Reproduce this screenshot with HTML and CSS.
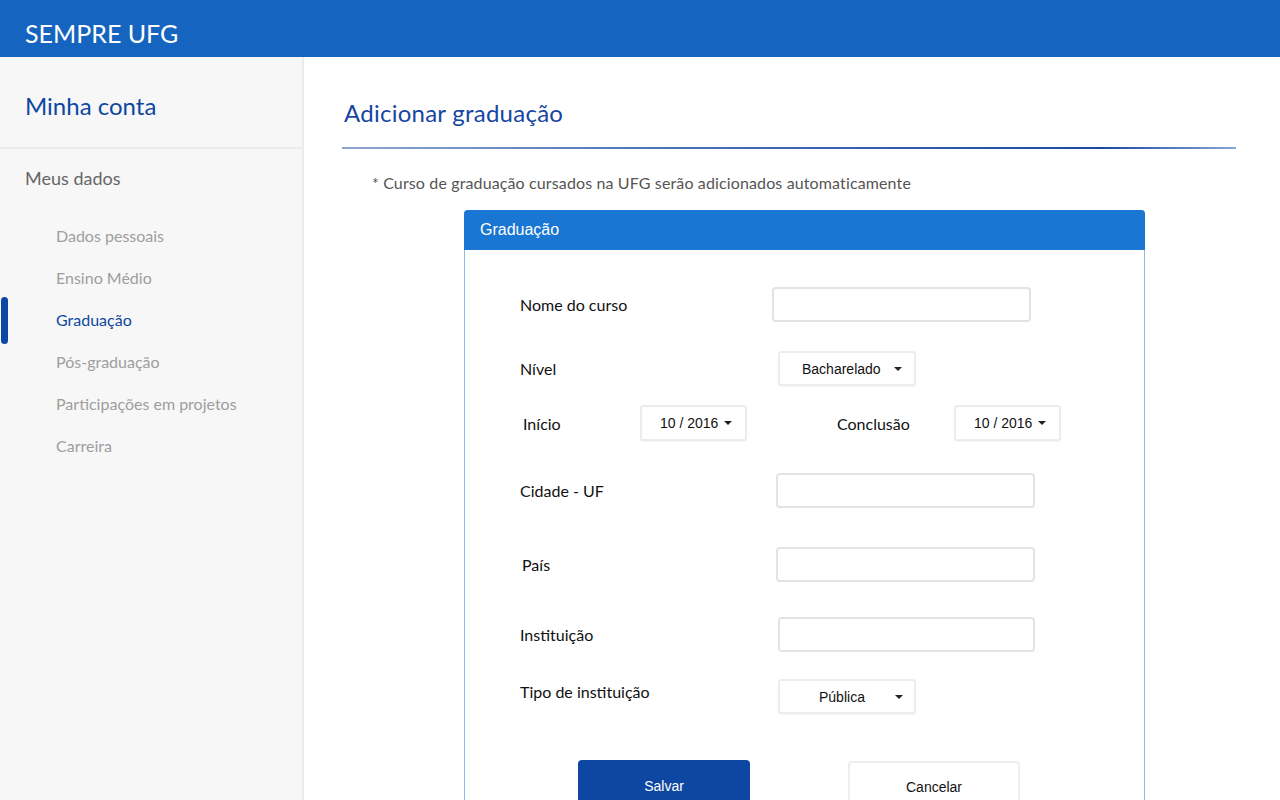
FILE: index.html
```html
<!DOCTYPE html>
<html lang="pt-BR">
<head>
<meta charset="utf-8">
<title>SEMPRE UFG - Adicionar graduação</title>
<link rel="stylesheet" href="styles.css">
</head>
<body>
<header class="topbar"><span class="brand">SEMPRE UFG</span></header>
<div class="layout">
  <aside class="sidebar">
    <div class="sidebar-head"><h2 class="account-title">Minha conta</h2></div>
    <nav class="sidebar-nav">
      <div class="section-title">Meus dados</div>
      <ul class="nav-list">
        <li class="nav-item">Dados pessoais</li>
        <li class="nav-item">Ensino Médio</li>
        <li class="nav-item active">Graduação</li>
        <li class="nav-item">Pós-graduação</li>
        <li class="nav-item">Participações em projetos</li>
        <li class="nav-item">Carreira</li>
      </ul>
    </nav>
  </aside>
  <main class="content">
    <h1 class="page-title">Adicionar graduação</h1>
    <div class="title-rule"></div>
    <p class="note">* Curso de graduação cursados na UFG serão adicionados automaticamente</p>
    <section class="card">
      <div class="card-header">Graduação</div>
      <form class="card-body">
        <div class="row row-nome">
          <label class="label">Nome do curso</label>
          <input class="text-input input-nome" type="text">
        </div>
        <div class="row row-nivel">
          <label class="label">Nível</label>
          <div class="select select-wide select-nivel"><span>Bacharelado</span><span class="caret"></span></div>
        </div>
        <div class="row row-datas">
          <label class="label label-inicio">Início</label>
          <div class="select select-date"><span>10 / 2016</span><span class="caret"></span></div>
          <label class="label label-conclusao">Conclusão</label>
          <div class="select select-date"><span>10 / 2016</span><span class="caret"></span></div>
        </div>
        <div class="row row-cidade">
          <label class="label">Cidade - UF</label>
          <input class="text-input" type="text">
        </div>
        <div class="row row-pais">
          <label class="label label-pais">País</label>
          <input class="text-input" type="text">
        </div>
        <div class="row row-inst">
          <label class="label">Instituição</label>
          <input class="text-input input-inst" type="text">
        </div>
        <div class="row row-tipo">
          <label class="label label-tipo">Tipo de instituição</label>
          <div class="select select-wide select-tipo"><span>Pública</span><span class="caret"></span></div>
        </div>
        <div class="actions">
          <button type="button" class="btn btn-primary">Salvar</button>
          <button type="button" class="btn btn-default">Cancelar</button>
        </div>
      </form>
    </section>
  </main>
</div>
</body>
</html>
```

FILE: styles.css
```css
* { box-sizing: border-box; }
html, body {
  margin: 0;
  height: 100%;
  overflow: hidden;
}
body {
  font-family: Lato, "Open Sans", sans-serif;
  background: #ffffff;
  color: #222;
}

.topbar {
  height: 57px;
  background: #1565c0;
  display: flex;
  align-items: center;
  padding-left: 25px;
}
.brand {
  color: #ffffff;
  font-size: 25px;
  padding-top: 8px;
}

.layout {
  display: flex;
  height: calc(100% - 57px);
}

.sidebar {
  width: 304px;
  flex: none;
  background: #f7f7f7;
  border-right: 2px solid #ececec;
}
.sidebar-head {
  height: 92px;
  border-bottom: 2px solid #ebebeb;
  display: flex;
  align-items: center;
  padding-left: 25px;
}
.account-title {
  margin: 0;
  font-size: 24px;
  font-weight: 400;
  color: #0d47a1;
  padding-top: 6px;
}
.section-title {
  font-size: 18px;
  color: #666666;
  padding-left: 25px;
  height: 40px;
  line-height: 40px;
  margin-top: 9px;
}
.nav-list {
  list-style: none;
  margin: 17px 0 0;
  padding: 0;
}
.nav-item {
  position: relative;
  height: 42px;
  line-height: 42px;
  padding-left: 56px;
  font-size: 16px;
  color: #9e9e9e;
}
.nav-item.active {
  color: #0d47a1;
}
.nav-item.active::before {
  content: "";
  position: absolute;
  left: 1px;
  top: -2px;
  width: 7px;
  height: 47px;
  border-radius: 4px;
  background: #0d47a1;
}

.content {
  flex: 1;
  padding: 0 44px 0 40px;
}
.page-title {
  margin: 37px 0 0;
  font-size: 24px;
  font-weight: 400;
  color: #1746a2;
  line-height: 38px;
  letter-spacing: 0.25px;
}
.title-rule {
  margin: 15px 0 0 -2px;
  height: 2px;
  background: linear-gradient(to right, #8ea6d2 0%, #4a73b8 35%, #1a4aa0 85%, #86a4d8 100%);
}
.note {
  margin: 22px 0 0 28px;
  font-size: 16px;
  color: #555555;
  line-height: 24px;
  letter-spacing: 0.13px;
}

.card {
  margin: 15px 0 0 120px;
  width: 681px;
  border: 1px solid #8dbbe9;
  border-top: none;
  border-radius: 4px 4px 0 0;
}
.card-header {
  height: 40px;
  background: #1976d2;
  color: #ffffff;
  font-family: "Liberation Sans", Arial, sans-serif;
  font-size: 16px;
  line-height: 40px;
  padding-left: 16px;
  border-radius: 4px 4px 0 0;
  margin: 0 -1px;
}
.card-body {
  padding: 37px 0 40px 55px;
  display: flex;
  flex-direction: column;
}

.row {
  display: flex;
  align-items: center;
}
.label {
  width: 256px;
  flex: none;
  font-size: 16px;
  color: #111111;
}
.row-nivel { margin-top: 29px; }
.row-datas { margin-top: 19px; }
.row-cidade { margin-top: 32px; }
.row-pais { margin-top: 39px; }
.row-inst { margin-top: 35px; }
.row-tipo { margin-top: 27px; }

.label-inicio { width: 120px; padding-left: 3px; }
.label-conclusao { width: 117px; margin-left: 90px; }
.label-pais { padding-left: 2px; }
.label-tipo { position: relative; top: -5px; }

.text-input {
  width: 259px;
  height: 35px;
  border: 2px solid #e3e3e3;
  border-radius: 4px;
  background: #ffffff;
  outline: none;
}
.input-nome { margin-left: -4px; }
.input-inst { margin-left: 2px; width: 257px; }

.select {
  height: 35px;
  border: 2px solid #ececec;
  border-radius: 3px;
  background: #ffffff;
  display: flex;
  align-items: center;
  font-family: "Liberation Sans", Arial, sans-serif;
  font-size: 14px;
  color: #111111;
  box-shadow: 0 1px 1px rgba(0,0,0,0.04);
}
.select-wide {
  width: 138px;
  margin-left: 2px;
}
.select-nivel { padding-left: 22px; gap: 13px; }
.select-tipo { padding-left: 39px; gap: 30px; }
.select-date {
  width: 107px;
  height: 36px;
  padding-left: 18px;
  gap: 6px;
}
.caret {
  width: 0;
  height: 0;
  border-left: 4px solid transparent;
  border-right: 4px solid transparent;
  border-top: 4px solid #222;
}

.actions {
  display: flex;
  gap: 98px;
  margin-top: 46px;
  padding-left: 58px;
}
.btn {
  width: 172px;
  height: 52px;
  border-radius: 4px;
  font-family: "Liberation Sans", Arial, sans-serif;
  font-size: 14px;
  cursor: pointer;
}
.btn-primary {
  background: #0d47a1;
  color: #ffffff;
  border: none;
}
.btn-default {
  background: #ffffff;
  color: #111111;
  border: 2px solid #eeeeee;
  margin-top: 1px;
}
```
